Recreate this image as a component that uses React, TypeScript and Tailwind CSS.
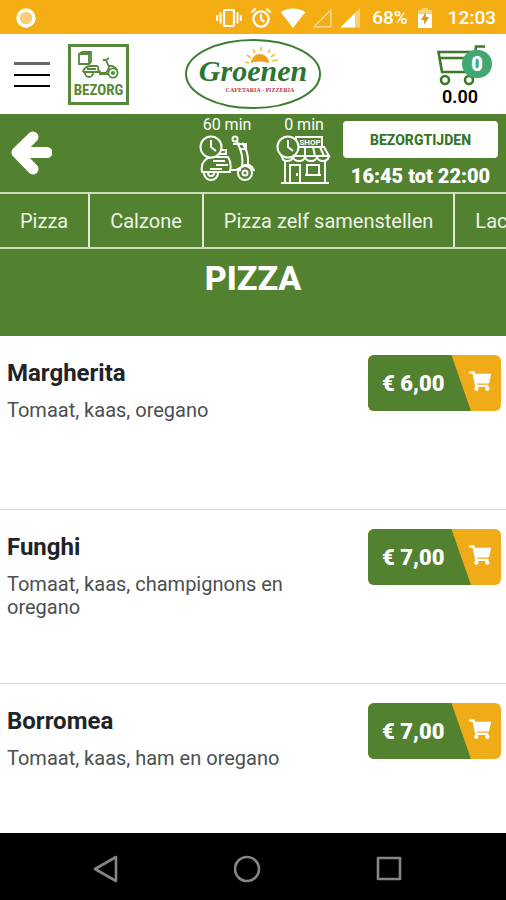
import { FaShoppingCart } from 'react-icons/fa';

const categories = ['Pizza', 'Calzone', 'Pizza zelf samenstellen', 'Lactosevrij'];

const pizzas = [
  { name: 'Margherita', description: 'Tomaat, kaas, oregano', price: '6,00' },
  { name: 'Funghi', description: 'Tomaat, kaas, champignons en oregano', price: '7,00' },
  { name: 'Borromea', description: 'Tomaat, kaas, ham en oregano', price: '7,00' },
];

function StatusBar() {
  return (
    <div className="flex h-[34px] shrink-0 items-center bg-[#f4ae14] pt-0.5 pr-2.5 pl-4 text-white">
      <svg className="h-5 w-5" viewBox="0 0 20 20">
        <circle cx="10" cy="10" r="8" fill="#f8cf78" stroke="#fff" strokeWidth="3.4" />
      </svg>
      <svg className="ml-auto h-5 w-[26px]" viewBox="0 0 26 20" fill="none" stroke="currentColor" strokeWidth="2.2">
        <rect x="8" y="2" width="10" height="16" rx="1" />
        <path d="M4.500 4.500v11M21.500 4.500v11M1.200 7v6M24.800 7v6" strokeWidth="2" />
      </svg>
      <svg className="ml-2 h-[22px] w-[22px]" viewBox="0 0 22 22" fill="none" stroke="currentColor" strokeWidth="2.2">
        <circle cx="11" cy="12" r="7.600" />
        <path d="M11 7v5.500l3.500 2.200M1.200 5.500l4.500-3.800M20.800 5.500l-4.500-3.800" />
      </svg>
      <svg className="ml-2 h-5 w-[26px]" viewBox="0 0 26 20" fill="currentColor">
        <path d="M13 20L.8 4.200Q6 .6 13 .6t12.200 3.600z" />
      </svg>
      <svg className="ml-1.5 h-5 w-5" viewBox="0 0 20 20" fill="none" stroke="#fad58b" strokeWidth="1.500">
        <path d="M18.800 2v16.800H2z" />
      </svg>
      <svg className="ml-2 h-5 w-5" viewBox="0 0 20 20">
        <path d="M20 0v19.500H.5z" fill="#f9cf79" />
        <path d="M15 5v14.500H.5z" fill="#fff" />
      </svg>
      <span className="ml-3 text-[19px] font-medium">68%</span>
      <svg className="ml-2.5 h-5 w-3.5" viewBox="0 0 14 20">
        <path d="M4 0h6v2h3q1 0 1 1v4H0V3q0-1 1-1h3z" fill="#f9cf79" />
        <path d="M0 6h14v13q0 1-1 1H1q-1 0-1-1z" fill="#fff" />
        <path d="M7.800 4L3 12h3.200v5L11 9H7.800z" fill="#e0950c" />
      </svg>
      <span className="ml-4 text-[19px] font-medium">12:03</span>
    </div>
  );
}

function DeliveryBadge() {
  return (
    <button
      aria-label="Bezorg"
      className="ml-[18px] flex h-[61px] w-[61px] flex-col items-center border-3 border-[#56893a] pt-1 text-[#56893a]"
    >
      <svg className="h-[28px] w-[42px] shrink-0" viewBox="0 0 42 28" fill="none" stroke="currentColor" strokeWidth="1.800">
        <path d="M1 3l3-2h9v10l-2 2H1zM1 3h10v10M11 3l2-2" />
        <path d="M12 15h7q2 1 1 3l2 4h5q3-1 4-6l-3-7h-3M28 9l3-2M12 15q-6 1-7 6M9 18h9M31 15q5-1 8 4" />
        <path d="M5 21h17v2h9" />
        <path d="M7 22a4 4 0 0 0 8 0" />
        <circle cx="35" cy="22" r="4.600" />
        <circle cx="35" cy="22" r="1.200" />
      </svg>
      <span className="font-['Liberation_Sans_Narrow','Roboto_Condensed','Roboto',sans-serif] text-[15px] leading-[22px] font-bold">
        BEZORG
      </span>
    </button>
  );
}

function Logo() {
  return (
    <svg className="h-[72px] w-[138px]" viewBox="0 0 138 72" role="img" aria-label="Groenen">
      <ellipse cx="69" cy="36" rx="67" ry="34" fill="#fff" stroke="#3c7d32" strokeWidth="2" />
      <path d="M67 25a9 9 0 0 1 18 0q-9-3-18 0z" fill="#f0a01c" />
      <path d="M61 24l4 1M63 17l4 3M69 11l2 4M77 9v4M86 11l-2 4M91 16l-4 3M88 23l6-1" stroke="#f4c044" strokeWidth="1.600" />
      <text
        x="69"
        y="43"
        textAnchor="middle"
        className="fill-[#2c7530] font-['Z003','URW_Chancery_L','Liberation_Serif',serif] text-[30px] font-bold italic"
      >
        Groenen
      </text>
      <text
        x="76"
        y="54"
        textAnchor="middle"
        className="fill-[#b43a48] font-['Liberation_Serif',serif] text-[6px] font-bold"
      >
        CAFETARIA - PIZZERIA
      </text>
    </svg>
  );
}

function Header() {
  return (
    <header className="flex h-20 shrink-0 items-center bg-white px-3.5">
      <div className="flex flex-1 items-center">
        <button aria-label="Menu" className="flex w-9 flex-col gap-[9px]">
          <span className="h-[3px] bg-[#666]" />
          <span className="h-0.5 bg-black" />
          <span className="h-0.5 bg-black" />
        </button>
        <DeliveryBadge />
      </div>
      <Logo />
      <div className="flex flex-1 justify-end">
        <button aria-label="Winkelwagen" className="relative flex w-14 flex-col items-center pt-1">
          <svg className="h-[42px] w-14" viewBox="0 0 56 42" fill="none" stroke="#3c7a28" strokeWidth="2.600">
            <path d="M49 1.500h-9L36.500 27H6L2.500 7H40M4 13h34" />
            <circle cx="9" cy="35" r="4" />
            <circle cx="33" cy="35" r="4" />
          </svg>
          <span className="absolute top-[9px] right-0 flex h-7 w-[30px] items-center justify-center rounded-full bg-[#43a772] text-xl font-black text-white">
            0
          </span>
          <span className="mr-2 text-lg leading-5 font-semibold text-black">0.00</span>
        </button>
      </div>
    </header>
  );
}

function Clock() {
  return (
    <>
      <circle cx="12" cy="12" r="10.500" fill="#528130" />
      <path d="M12 5v7l5 4" />
    </>
  );
}

function ScooterIcon() {
  return (
    <svg className="h-12 w-14" viewBox="0 0 56 48" fill="none" stroke="currentColor" strokeWidth="2">
      <path d="M19 15h8v4h-9M3 37q-2-12 9-15h17q4 6 2 14v1H3zM14 26h12M17 30h12M11 34h12M31 35h11" />
      <path d="M39 9q6 12 4 23l-6 3M43 8q7 8 6 22M34 9h13v5h-7M37 6l4 4M40 36q2-7 10-6 4 2 5 6" />
      <circle cx="36" cy="4" r="2.500" />
      <circle cx="46" cy="38" r="7" />
      <circle cx="46" cy="38" r="2.500" />
      <path d="M5 38a7 7 0 0 0 14 0M9 38a3 3 0 0 0 6 0" />
      <Clock />
    </svg>
  );
}

function ShopIcon() {
  return (
    <svg className="h-[50px] w-14" viewBox="0 0 56 50" fill="none" stroke="currentColor" strokeWidth="2">
      <path d="M20 2h26v10H20z" />
      <text
        x="34"
        y="10"
        textAnchor="middle"
        className="fill-white stroke-none font-['Roboto',sans-serif] text-[8px] font-bold"
      >
        SHOP
      </text>
      <path d="M12 12h36l5 9H6zM21 12l-2 9M29 12v9M37 12l2 9M44 12l4 9" />
      <path d="M6 21q0 5 5 5t6-4q1 4 6 4t6-4q1 4 6 4t6-4q1 4 6 4t6-5" />
      <path d="M9 26v21M49 26v21M5 48h48M14 47V30h10v17M29 40h16M31 39V30h12v9M21 38v3" />
      <Clock />
    </svg>
  );
}

function InfoBar() {
  return (
    <div className="flex h-[78px] shrink-0 bg-[#528130] pr-2 pl-2.5 text-white">
      <button aria-label="Terug" className="mr-auto">
        <svg className="h-11 w-[42px]" viewBox="0 0 42 44" fill="none" stroke="currentColor" strokeWidth="11" strokeLinejoin="round">
          <path d="M37 21.500H12M23 6L7 21.500 23 38" strokeLinecap="round" />
        </svg>
      </button>
      <div className="flex w-[76px] flex-col items-center text-base leading-[21px]">
        60 min
        <ScooterIcon />
      </div>
      <div className="flex w-[78px] flex-col items-center text-base leading-[21px]">
        0 min
        <ShopIcon />
      </div>
      <div className="flex w-[155px] flex-col items-center pt-[7px]">
        <button className="h-[37px] w-full shrink-0 rounded-sm bg-white text-sm font-extrabold text-[#35752a]">
          BEZORGTIJDEN
        </button>
        <span className="mt-1.5 text-xl leading-6 font-black whitespace-nowrap">16:45 tot 22:00</span>
      </div>
    </div>
  );
}

function CategoryNav() {
  return (
    <nav className="flex h-[57px] shrink-0 overflow-hidden border-y-2 border-[#ccdcb9] bg-[#528130] text-xl text-[#eef4e8]">
      {categories.map((category) => (
        <a
          key={category}
          href="#"
          className="flex shrink-0 items-center border-r-2 border-[#dfe9d3] px-5 whitespace-nowrap"
        >
          {category}
        </a>
      ))}
    </nav>
  );
}

function PizzaRow({ name, description, price }: { name: string; description: string; price: string }) {
  return (
    <li className="flex h-[174px] shrink-0 justify-between border-b border-[#d6d6d6] pt-[19px] pr-[5px] pl-[7px]">
      <div className="w-[300px] pt-1">
        <h2 className="text-2xl leading-7 font-bold text-[#202427]">{name}</h2>
        <p className="mt-3 text-xl leading-[23px] text-[#4c4f52]">{description}</p>
      </div>
      <button className="relative flex h-14 w-[133px] items-center overflow-hidden rounded-md bg-[#f0ac18] text-white">
        <span className="flex h-full w-[103px] items-center bg-[#528130] pl-3.5 text-[22px] font-black [clip-path:polygon(0_0,81%_0,100%_100%,0_100%)]">
          € {price}
        </span>
        <FaShoppingCart className="absolute right-2.5 bottom-5 h-5 w-[22px]" />
      </button>
    </li>
  );
}

function AndroidNav() {
  return (
    <div className="flex h-[67px] shrink-0 items-center justify-between bg-black pt-1 pr-[102px] pl-[92px] text-[#858585]">
      <button aria-label="Back">
        <svg className="h-7 w-7" viewBox="0 0 28 28" fill="none" stroke="currentColor" strokeWidth="2.600" strokeLinejoin="round">
          <path d="M24 2v24L3 14z" />
        </svg>
      </button>
      <button aria-label="Home">
        <svg className="h-7 w-7" viewBox="0 0 28 28" fill="none" stroke="currentColor" strokeWidth="2.600">
          <circle cx="13" cy="14" r="12" />
        </svg>
      </button>
      <button aria-label="Recent apps">
        <svg className="h-7 w-7" viewBox="0 0 28 28" fill="none" stroke="currentColor" strokeWidth="2.600" strokeLinejoin="round">
          <path d="M2 3h22v21H2z" />
        </svg>
      </button>
    </div>
  );
}

export default function App() {
  return (
    <div className="flex h-screen flex-col bg-white font-['Roboto',sans-serif]">
      <StatusBar />
      <Header />
      <InfoBar />
      <CategoryNav />
      <main className="flex min-h-0 flex-1 flex-col overflow-hidden">
        <h1 className="h-[87px] shrink-0 bg-[#528130] pt-2 text-center text-[34px] leading-[42px] font-extrabold text-white">
          PIZZA
        </h1>
        <ul className="flex flex-col">
          {pizzas.map((pizza) => (
            <PizzaRow key={pizza.name} {...pizza} />
          ))}
        </ul>
      </main>
      <AndroidNav />
    </div>
  );
}
